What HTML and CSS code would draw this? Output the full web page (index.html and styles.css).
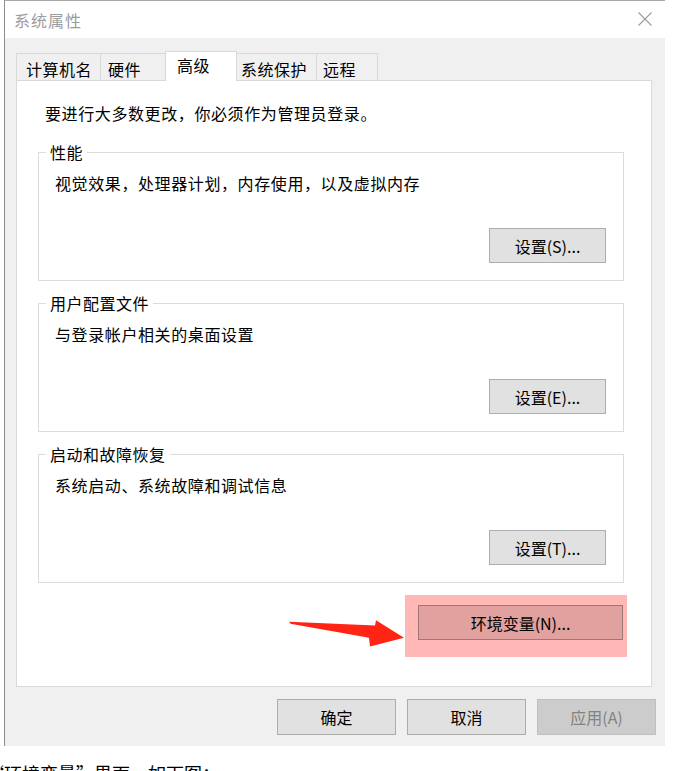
FILE: index.html
```html
<!DOCTYPE html>
<html lang="zh-CN">
<head>
<meta charset="utf-8">
<title>系统属性</title>
<link rel="stylesheet" href="styles.css">
</head>
<body>
<div class="window">
  <div class="titlebar">
    <span class="title">系统属性</span>
    <svg class="close" width="14" height="14" viewBox="0 0 14 14"><path d="M0.5 0.5 L13.5 13.5 M13.5 0.5 L0.5 13.5" stroke="#9a9a9a" stroke-width="1.1" fill="none"/></svg>
  </div>
  <div class="client">
    <div class="tabs">
      <div class="tab t1">计算机名</div>
      <div class="tab t2">硬件</div>
      <div class="tab active">高级</div>
      <div class="tab t4">系统保护</div>
      <div class="tab t5">远程</div>
    </div>
    <div class="panel">
      <p class="intro">要进行大多数更改，你必须作为管理员登录。</p>
      <fieldset class="group">
        <legend>性能</legend>
        <div class="gbody">
          <p class="desc">视觉效果，处理器计划，内存使用，以及虚拟内存</p>
          <div class="btnrow"><button class="btn set">设置(S)...</button></div>
        </div>
      </fieldset>
      <fieldset class="group">
        <legend>用户配置文件</legend>
        <div class="gbody">
          <p class="desc">与登录帐户相关的桌面设置</p>
          <div class="btnrow"><button class="btn set">设置(E)...</button></div>
        </div>
      </fieldset>
      <fieldset class="group">
        <legend>启动和故障恢复</legend>
        <div class="gbody">
          <p class="desc">系统启动、系统故障和调试信息</p>
          <div class="btnrow"><button class="btn set">设置(T)...</button></div>
        </div>
      </fieldset>
      <div class="envrow">
        <div class="highlight"><button class="btn env">环境变量(N)...</button></div>
      </div>
      <svg class="arrow" width="118" height="32" viewBox="0 0 118 32"><polygon points="0,3.7 86,7.6 87,2.3 115,19.7 81,28.5 80,19.8 1.5,5.8" fill="#ff2414"/></svg>
    </div>
    <div class="actions">
      <button class="btn act">确定</button>
      <button class="btn act">取消</button>
      <button class="btn act disabled">应用(A)</button>
    </div>
  </div>
</div>
<p class="caption">“环境变量”界面，如下图：</p>
</body>
</html>
```

FILE: styles.css
```css
html, body {
  margin: 0;
  padding: 0;
}
body {
  width: 677px;
  height: 771px;
  overflow: hidden;
  background: #ffffff;
  font-family: "Noto Sans CJK SC", "Microsoft YaHei", "Noto Sans", sans-serif;
  color: #000;
}
.window {
  margin-left: 4px;
  width: 661px;
  box-sizing: border-box;
  border-top: 1px solid #a8a8a8;
  border-left: 1px solid #8c8c8c;
}
.titlebar {
  height: 37px;
  background: #fff;
  display: flex;
  align-items: center;
  justify-content: space-between;
  padding: 0 13px 0 9px;
}
.title {
  font-size: 16px;
  line-height: 18px;
  letter-spacing: 1px;
  color: #9c9c9c;
}
.close {
  display: block;
  margin-top: -1px;
}
.client {
  height: 708px;
  box-sizing: border-box;
  background: #f0f0f0;
  padding: 13px 13px 0 11px;
}
.tabs {
  display: flex;
  align-items: flex-end;
  height: 29px;
}
.tab {
  height: 27px;
  box-sizing: border-box;
  border: 1px solid #d9d9d9;
  border-bottom: none;
  background: #f0f0f0;
  font-size: 16px;
  line-height: 18px;
  letter-spacing: 0.5px;
  padding-top: 6px;
  margin-left: -1px;
  white-space: nowrap;
}
.t1 { margin-left: 0; width: 85px; padding-left: 9px; }
.t2 { width: 66px; padding-left: 7px; }
.tab.active {
  height: 30px;
  width: 72px;
  margin-bottom: -1px;
  background: #fff;
  padding-top: 4px;
  padding-left: 11px;
  position: relative;
  z-index: 1;
}
.t4 { width: 81px; padding-left: 4px; }
.t5 { width: 62px; padding-left: 6px; }
.panel {
  position: relative;
  width: 636px;
  height: 607px;
  box-sizing: border-box;
  background: #fff;
  border: 1px solid #d9d9d9;
  padding: 23px 27px 0 21px;
}
.intro {
  margin: 0 0 21px;
  padding-left: 7px;
  font-size: 16px;
  line-height: 18px;
  letter-spacing: 0.6px;
}
.group {
  margin: 0 0 13px;
  padding: 0;
  border: 1px solid #dcdcdc;
  min-width: 0;
}
.group legend {
  margin-left: 7px;
  padding: 0 4px;
  font-size: 16px;
  line-height: 18px;
  letter-spacing: 0.5px;
}
.gbody {
  padding: 13px 17px 17px 16px;
}
.desc {
  margin: 0;
  font-size: 16px;
  line-height: 18px;
  letter-spacing: 0.6px;
}
.btnrow {
  display: flex;
  justify-content: flex-end;
  margin-top: 36px;
}
.btn {
  font-family: inherit;
  font-size: 16px;
  line-height: 18px;
  color: #000;
  background: #e1e1e1;
  border: 1px solid #adadad;
  border-radius: 0;
  padding: 0;
  margin: 0;
  box-sizing: border-box;
}
.set {
  width: 117px;
  height: 35px;
}
.envrow {
  display: flex;
  justify-content: flex-end;
  margin-right: -3px;
  margin-top: -1px;
}
.highlight {
  background: #ffb8b6;
  padding: 10px 4px 17px 13px;
}
.env {
  width: 205px;
  height: 35px;
  background: #e0a19f;
  border-color: #9e7775;
}
.arrow {
  position: absolute;
  left: 272px;
  top: 537px;
  display: block;
}
.actions {
  display: flex;
  justify-content: flex-end;
  gap: 11px;
  margin-top: 12px;
  margin-right: -4px;
}
.act {
  width: 119px;
  height: 36px;
}
.act.disabled {
  background: #cccccc;
  border-color: #bfbfbf;
  color: #838383;
}
.caption {
  margin: 16px 0 0 -14px;
  font-size: 18px;
  line-height: 22px;
  white-space: nowrap;
}
```
